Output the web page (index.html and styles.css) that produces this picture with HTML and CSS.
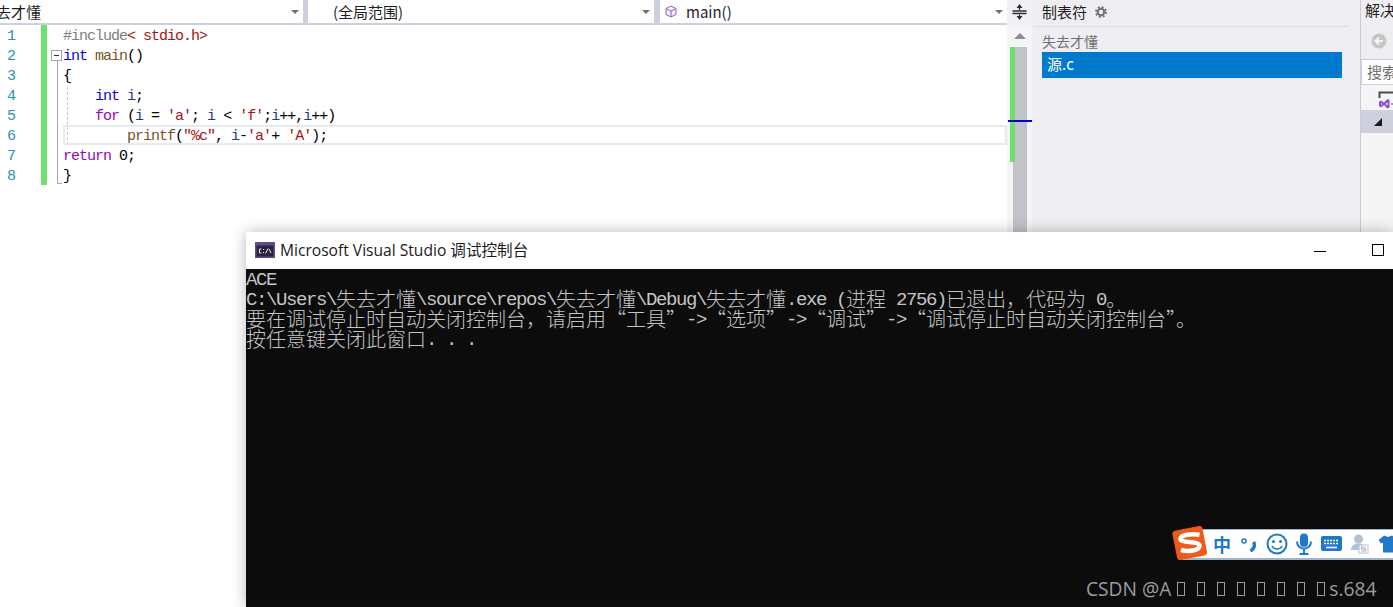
FILE: index.html
```html
<!DOCTYPE html>
<html lang="zh-CN">
<head>
<meta charset="utf-8">
<title>Visual Studio</title>
<link rel="stylesheet" href="styles.css">
</head>
<body>
<div class="ide">
  <section class="editor">
    <div class="navbar">
      <div class="combo combo-project"><span class="combo-text clip">失去才懂</span><i class="caret"></i></div>
      <div class="combo combo-scope"><span class="combo-text">(全局范围)</span><i class="caret"></i></div>
      <div class="combo combo-member">
        <svg class="cube" width="12" height="13" viewBox="0 0 12 13"><path d="M6 1 11 3.5V9.5L6 12 1 9.5V3.5ZM1 3.5 6 6 11 3.5M6 6V12" fill="#f3eef9" stroke="#8a63c4" stroke-width="1"/></svg>
        <span class="combo-text">main()</span><i class="caret"></i>
      </div>
      <div class="split">
        <svg width="15" height="16" viewBox="0 0 15 16"><path d="M0.500 7H14.500M0.500 9.500H14.500" stroke="#2e2e2e" stroke-width="1.300"/><path d="M7.500 0 10.500 4H4.500ZM7.500 16 4.500 12H10.500Z" fill="#2e2e2e"/><path d="M7.500 3V6M7.500 10.500V13" stroke="#2e2e2e" stroke-width="1.200"/></svg>
      </div>
    </div>
    <div class="codepane">
      <div class="numbers">
        <div>1</div><div>2</div><div>3</div><div>4</div><div>5</div><div>6</div><div>7</div><div>8</div>
      </div>
      <div class="changed"></div>
      <svg class="folds" width="15" height="160" viewBox="0 0 15 160">
        <rect x="3.500" y="25.500" width="10" height="10" fill="#fff" stroke="#a5a5a5"/>
        <path d="M6 30.500H11" stroke="#333"/>
        <path d="M9.500 36V158.500H14" fill="none" stroke="#a5a5a5"/>
        <path d="M19.500 62V120" fill="none" stroke="#c8c8c8" stroke-dasharray="3 2"/>
      </svg>
      <div class="code">
        <div class="ln"><span class="pre">#include</span><span class="str">&lt; stdio.h&gt;</span></div>
        <div class="ln"><span class="kw">int</span> <span class="fn">main</span>()</div>
        <div class="ln">{</div>
        <div class="ln">    <span class="kw">int</span> <span class="var">i</span>;</div>
        <div class="ln">    <span class="ctl">for</span> (<span class="var">i</span> = <span class="str">'a'</span>; <span class="var">i</span> &lt; <span class="str">'f'</span>;<span class="var">i</span>++,<span class="var">i</span>++)</div>
        <div class="ln current">        <span class="fn">printf</span>(<span class="str">"%c"</span>, <span class="var">i</span>-<span class="str">'a'</span>+ <span class="str">'A'</span>);</div>
        <div class="ln"><span class="ctl">return</span> 0;</div>
        <div class="ln">}</div>
      </div>
      <div class="scroll">
        <div class="scroll-up"><i class="arrow-up"></i></div>
        <div class="track"></div>
        <div class="map-green"></div>
        <div class="map-caret"></div>
      </div>
    </div>
  </section>

  <aside class="tabs-panel">
    <header class="panel-head">
      <span>制表符</span>
      <svg width="12" height="12" viewBox="0 0 12 12"><circle cx="6" cy="6" r="3.200" fill="none" stroke="#717171" stroke-width="2"/><circle cx="6" cy="6" r="5" fill="none" stroke="#717171" stroke-width="1.800" stroke-dasharray="2 1.930"/></svg>
    </header>
    <div class="group-name">失去才懂</div>
    <div class="tab-item">源.c</div>
  </aside>

  <aside class="solution">
    <div class="sol-title">解决方案资源管理器</div>
    <div class="sol-tools">
      <svg width="16" height="16" viewBox="0 0 16 16"><circle cx="8" cy="8" r="7.500" fill="#c6c6c6"/><path d="M12 8H5M8 4.500 4.500 8 8 11.500" fill="none" stroke="#f5f5f5" stroke-width="2"/></svg>
    </div>
    <div class="sol-search">搜索解决方案资源管理器</div>
    <div class="sol-node">
      <svg width="16" height="18" viewBox="0 0 16 18"><path d="M1.500 7V1.500H15" fill="none" stroke="#4a4a4a" stroke-width="2"/><path d="M1 11 3 9.500 6 11.500 9.500 8 11.500 9V16.500L9.500 17.500 6 14 3 16.500 1 15ZM3 12V14L4.500 13ZM9.500 11 7.500 13 9.500 14.500Z" fill="#8a4fd0" fill-rule="evenodd"/><path d="M13 13H15" stroke="#4a4a4a"/></svg>
    </div>
    <div class="sol-row"><svg width="8" height="8" viewBox="0 0 8 8"><path d="M8 0V8H0Z" fill="#1e1e1e"/></svg></div>
  </aside>
</div>

<div class="console">
  <div class="titlebar">
    <svg class="app-icon" width="20" height="16" viewBox="0 0 20 16"><rect width="20" height="16" fill="#5f4a8c"/><rect x="1.500" y="3.500" width="17" height="11" fill="#2b2440"/><path d="M6.500 7H4.500V11H6.500M8.500 7V8M8.500 10V11M13 6.500 10.500 11.500M14 7 16 11" fill="none" stroke="#e4e0ee" stroke-width="1"/></svg>
    <span class="title-text">Microsoft Visual Studio 调试控制台</span>
    <div class="winbtns">
      <i class="win-min"></i>
      <i class="win-max"></i>
    </div>
  </div>
  <div class="terminal">
    <div class="tl">ACE</div>
    <div class="tl">C:\Users\<span class="zh">失去才懂</span>\source\repos\<span class="zh">失去才懂</span>\Debug\<span class="zh">失去才懂</span>.exe (<span class="zh">进程</span> 2756)<span class="zh">已退出，代码为</span> 0<span class="zh">。</span></div>
    <div class="tl"><span class="zh">要在调试停止时自动关闭控制台，请启用“工具”</span>-&gt;<span class="zh">“选项”</span>-&gt;<span class="zh">“调试”</span>-&gt;<span class="zh">“调试停止时自动关闭控制台”。</span></div>
    <div class="tl"><span class="zh">按任意键关闭此窗口</span>. . .</div>
  </div>
</div>

<div class="ime">
  <svg class="ime-logo" width="36" height="36" viewBox="0 0 36 36">
    <rect x="2.500" y="3" width="30.500" height="30" rx="3" transform="rotate(-11 18 18)" fill="#ee5a1c"/>
    <path d="M27.500 10C20 8.500 8.500 9.500 8.500 14 8.500 18.500 27.500 15.500 27.500 21 27.500 25.500 16 27 9 25" fill="none" stroke="#fff" stroke-width="4.500"/>
  </svg>
  <div class="ime-bar">
    <span class="ime-cn">中</span>
    <svg class="g1" width="16" height="16" viewBox="0 0 16 16"><circle cx="3" cy="5" r="2" fill="none" stroke="#1f78c8" stroke-width="1.500"/><path d="M12.500 6C14.500 9 13 13 9.500 15" fill="none" stroke="#1f78c8" stroke-width="3.400"/></svg>
    <svg class="g2" width="22" height="22" viewBox="0 0 22 22"><circle cx="11" cy="11" r="9.500" fill="#fff" stroke="#1f78c8" stroke-width="2"/><circle cx="7.500" cy="8.500" r="1.500" fill="#1f78c8"/><circle cx="14.500" cy="8.500" r="1.500" fill="#1f78c8"/><path d="M6 13C8 17 14 17 16 13" fill="none" stroke="#1f78c8" stroke-width="1.600"/></svg>
    <svg class="g3" width="16" height="22" viewBox="0 0 16 22"><rect x="4" y="0.500" width="8" height="13.500" rx="4" fill="#1f78c8"/><path d="M1 8.500C1 18 15 18 15 8.500M8 16V20M3.500 21H12.500" fill="none" stroke="#1f78c8" stroke-width="2"/></svg>
    <svg class="g4" width="21" height="16" viewBox="0 0 21 16"><rect width="21" height="15" rx="2" fill="#1f78c8"/><path d="M3 4.500H18M3 7.500H18" stroke="#fff" stroke-width="1.600" stroke-dasharray="2 1"/><path d="M5 11.500H16" stroke="#fff" stroke-width="1.600"/></svg>
    <svg class="g5" width="18" height="20" viewBox="0 0 18 20"><circle cx="7.500" cy="5" r="4.500" fill="#b4c2d2"/><path d="M0 16C0 11 4 9.500 7.500 9.500S15 11 15 16Z" fill="#b4c2d2"/><rect x="8" y="11" width="9" height="8" fill="#fff" stroke="#b4c2d2"/><path d="M14.500 13H10.500V15H14.500V17H10.500" fill="none" stroke="#9fb0c3" stroke-width="1.200"/></svg>
    <svg class="g6" width="20" height="18" viewBox="0 0 20 18"><path d="M6 0.500 10 2 14 0.500 19.500 5 17 8.500 15 7.500V17.500H5V7.500L3 8.500 0.500 5Z" fill="#1f78c8"/></svg>
  </div>
</div>

<div class="watermark">CSDN @A<span class="marks"><i></i><i></i><i></i><i></i><i></i><i></i><i></i><i></i></span>s.684</div>
</body>
</html>
```
FILE: styles.css
```css
* { box-sizing: border-box; }
html, body { margin: 0; padding: 0; }
body {
  position: relative;
  width: 1393px;
  height: 607px;
  overflow: hidden;
  background: #fff;
  font-family: "Noto Sans CJK SC", "Open Sans", sans-serif;
}
i { display: block; }
svg { display: block; }

.ide {
  display: grid;
  grid-template-columns: 1032px 328px 33px;
  height: 607px;
}

/* editor */
.editor { display: flex; flex-direction: column; min-width: 0; background: #fff; }
.navbar {
  display: flex;
  height: 25px;
  padding-bottom: 2px;
  background: #cfd0de;
}
.combo {
  display: flex;
  align-items: center;
  height: 23px;
  background: #fff;
  font-size: 15px;
  color: #1e1e1e;
  overflow: hidden;
}
.combo-project { width: 303px; margin-right: 5px; }
.combo-scope { width: 346px; margin-right: 6px; padding-left: 25px; }
.combo-member { width: 347px; padding-left: 5px; }
.combo-text { line-height: 23px; white-space: nowrap; }
.clip { margin-left: -19px; }
.cube { margin-right: 9px; flex: none; }
.caret {
  margin-left: auto;
  margin-right: 4px;
  width: 0;
  height: 0;
  border-left: 4px solid transparent;
  border-right: 4px solid transparent;
  border-top: 4px solid #717171;
}
.split {
  flex: 1;
  height: 25px;
  margin-bottom: -2px;
  display: flex;
  align-items: center;
  justify-content: flex-end;
  padding: 0 5px 2px 0;
  background: #f1f1f5;
}

.codepane { position: relative; flex: 1; display: flex; }
.numbers {
  width: 41px;
  padding-left: 7px;
  font: 15px/23px "Liberation Mono", monospace;
  letter-spacing: -1px;
  color: #2b91af;
}
.numbers div { height: 20px; }
.changed { width: 6px; height: 160px; margin-right: 1px; background: #6ee06e; }
.folds { flex: none; overflow: visible; }
.code {
  width: 944px;
  font: 15px/23px "Liberation Mono", monospace;
  letter-spacing: -1px;
  color: #000;
}
.ln { height: 20px; white-space: pre; }
.current { box-shadow: inset 0 0 0 2px #e9e9f1; }
.pre { color: #808080; }
.str { color: #a31515; }
.kw { color: #0000ff; }
.ctl { color: #8f08c4; }
.fn { color: #74531f; }
.var { color: #1f377f; }

.scroll {
  position: relative;
  width: 25px;
  background: #f5f5f5;
  display: flex;
  flex-direction: column;
  align-items: center;
}
.scroll-up { height: 22px; display: flex; align-items: center; justify-content: center; padding-left: 1px; }
.arrow-up {
  width: 0;
  height: 0;
  border-left: 6px solid transparent;
  border-right: 6px solid transparent;
  border-bottom: 6px solid #8c8c98;
}
.track { width: 14px; flex: 1; margin-left: 1px; background: #c2c3c9; }
.map-green { position: absolute; left: 3px; top: 22px; width: 5px; height: 115px; background: #6ee06e; }
.map-caret { position: absolute; left: 1px; right: 0; top: 95px; height: 2px; background: #0000cd; }

/* tabs panel */
.tabs-panel { background: #eeeef2; padding: 0 18px 0 10px; font-size: 14px; }
.panel-head {
  display: flex;
  align-items: center;
  gap: 8px;
  height: 27px;
  margin-left: -8px;
  padding: 0 0 3px 8px;
  margin-right: -7px;
  border-bottom: 1px solid #dcdce6;
  color: #1e1e1e;
  font-size: 15px;
  line-height: 24px;
}
.group-name { height: 25px; padding-top: 4px; line-height: 20px; color: #717171; }
.tab-item {
  height: 26px;
  padding-left: 5px;
  font-size: 15px;
  line-height: 24px;
  background: #007acc;
  color: #fff;
}

/* solution explorer */
.solution {
  background: #f5f5f5;
  border-left: 1px solid #ccc9dc;
  overflow: hidden;
  white-space: nowrap;
  font-size: 15px;
}
.sol-title { height: 26px; padding-left: 4px; line-height: 20px; background: #eeeef2; color: #1e1e1e; }
.sol-tools { height: 33px; padding: 7px 0 0 10px; background: #eeeef2; }
.sol-search {
  height: 26px;
  padding-left: 5px;
  line-height: 24px;
  background: #fff;
  border: 1px solid #cccedb;
  border-right: 0;
  color: #717171;
}
.sol-node { height: 25px; padding: 6px 0 0 17px; }
.sol-row { height: 23px; padding: 8px 0 0 13px; background: #cfd0de; }

/* console window */
.console {
  position: absolute;
  left: 246px;
  top: 232px;
  width: 1147px;
  height: 375px;
  display: flex;
  flex-direction: column;
  box-shadow: 0 0 14px rgba(0, 0, 0, 0.28);
}
.titlebar {
  display: flex;
  align-items: center;
  height: 37px;
  padding-left: 9px;
  background: #fff;
}
.app-icon { flex: none; margin-right: 5px; margin-top: -1px; }
.title-text {
  font-family: "Open Sans", "Noto Sans CJK SC", sans-serif;
  font-size: 15.600px;
  line-height: 37px;
  color: #1a1a1a;
}
.winbtns { display: flex; align-items: center; margin-left: auto; padding-right: 9px; gap: 46px; }
.win-min { width: 12px; height: 1px; margin-top: 1px; background: #000; }
.win-max { width: 12px; height: 12px; border: 1px solid #000; margin-top: -1px; }
.terminal {
  flex: 1;
  padding-top: 1px;
  background: #0c0c0c;
  color: #c4c4c4;
  font: 19px/20px "Liberation Mono", monospace;
  letter-spacing: -1.400px;
}
.tl { height: 20px; white-space: pre; }
.zh {
  font-family: "Noto Sans CJK SC", sans-serif;
  font-size: 20px;
  font-weight: 300;
  line-height: 0;
  letter-spacing: 0;
  vertical-align: -2px;
}

/* input method bar */
.ime {
  position: absolute;
  left: 1172px;
  top: 525px;
  width: 221px;
  height: 36px;
  display: flex;
  align-items: center;
}
.ime-logo { position: relative; z-index: 1; flex: none; }
.ime-bar {
  flex: 1;
  height: 31px;
  margin-top: 3px;
  margin-left: -26px;
  padding-left: 31px;
  display: flex;
  align-items: center;
  background: #fff;
  border-top: 1px solid #9fb4cc;
  border-bottom: 2px solid #9fb4cc;
  overflow: hidden;
}
.ime-bar svg { flex: none; }
.ime-cn { font-size: 18px; font-weight: 700; line-height: 28px; color: #1f78c8; }
.ime-bar .g1 { margin-left: 10px; }
.ime-bar .g2 { margin-left: 9px; }
.ime-bar .g3 { margin-left: 8px; }
.ime-bar .g4 { margin-left: 9px; }
.ime-bar .g5 { margin-left: 9px; }
.ime-bar .g6 { margin-left: 9px; }

.watermark {
  position: absolute;
  left: 1086px;
  top: 575px;
  font-family: "Open Sans", sans-serif;
  font-size: 19.200px;
  line-height: 28px;
  color: #9c9c9c;
  white-space: nowrap;
  display: flex;
  align-items: center;
}
.marks { display: flex; gap: 12px; margin: 0 4px 0 6px; }
.marks i { width: 8px; height: 14px; border: 1px solid #9c9c9c; }
```
